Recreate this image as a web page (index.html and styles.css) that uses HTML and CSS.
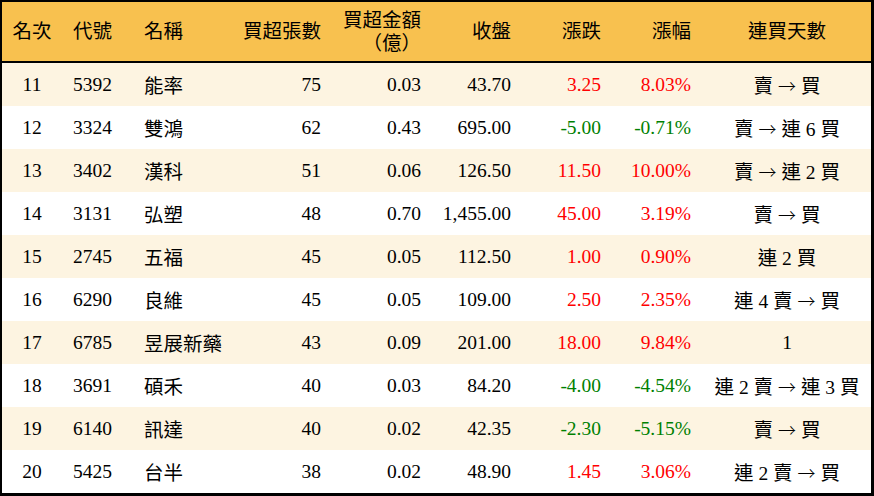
FILE: index.html
```html
<!DOCTYPE html>
<html lang="zh-Hant">
<head>
<meta charset="utf-8">
<title>買超排行</title>
<link rel="stylesheet" href="styles.css">
</head>
<body>
<div class="board">
  <div class="row head">
    <div class="c center">名次</div>
    <div class="c left code">代號</div>
    <div class="c left name">名稱</div>
    <div class="c right">買超張數</div>
    <div class="c right two">買超金額<br>（億）</div>
    <div class="c right">收盤</div>
    <div class="c right">漲跌</div>
    <div class="c right">漲幅</div>
    <div class="c center">連買天數</div>
  </div>

  <div class="row odd">
    <div class="c center">11</div><div class="c left code">5392</div><div class="c left name">能率</div>
    <div class="c right">75</div><div class="c right">0.03</div><div class="c right">43.70</div>
    <div class="c right up">3.25</div><div class="c right up">8.03%</div><div class="c center">賣 <span class="arr">→</span> 買</div>
  </div>
  <div class="row">
    <div class="c center">12</div><div class="c left code">3324</div><div class="c left name">雙鴻</div>
    <div class="c right">62</div><div class="c right">0.43</div><div class="c right">695.00</div>
    <div class="c right down">-5.00</div><div class="c right down">-0.71%</div><div class="c center">賣 <span class="arr">→</span> 連 6 買</div>
  </div>
  <div class="row odd">
    <div class="c center">13</div><div class="c left code">3402</div><div class="c left name">漢科</div>
    <div class="c right">51</div><div class="c right">0.06</div><div class="c right">126.50</div>
    <div class="c right up">11.50</div><div class="c right up">10.00%</div><div class="c center">賣 <span class="arr">→</span> 連 2 買</div>
  </div>
  <div class="row">
    <div class="c center">14</div><div class="c left code">3131</div><div class="c left name">弘塑</div>
    <div class="c right">48</div><div class="c right">0.70</div><div class="c right">1,455.00</div>
    <div class="c right up">45.00</div><div class="c right up">3.19%</div><div class="c center">賣 <span class="arr">→</span> 買</div>
  </div>
  <div class="row odd">
    <div class="c center">15</div><div class="c left code">2745</div><div class="c left name">五福</div>
    <div class="c right">45</div><div class="c right">0.05</div><div class="c right">112.50</div>
    <div class="c right up">1.00</div><div class="c right up">0.90%</div><div class="c center">連 2 買</div>
  </div>
  <div class="row">
    <div class="c center">16</div><div class="c left code">6290</div><div class="c left name">良維</div>
    <div class="c right">45</div><div class="c right">0.05</div><div class="c right">109.00</div>
    <div class="c right up">2.50</div><div class="c right up">2.35%</div><div class="c center">連 4 賣 <span class="arr">→</span> 買</div>
  </div>
  <div class="row odd">
    <div class="c center">17</div><div class="c left code">6785</div><div class="c left name">昱展新藥</div>
    <div class="c right">43</div><div class="c right">0.09</div><div class="c right">201.00</div>
    <div class="c right up">18.00</div><div class="c right up">9.84%</div><div class="c center">1</div>
  </div>
  <div class="row">
    <div class="c center">18</div><div class="c left code">3691</div><div class="c left name">碩禾</div>
    <div class="c right">40</div><div class="c right">0.03</div><div class="c right">84.20</div>
    <div class="c right down">-4.00</div><div class="c right down">-4.54%</div><div class="c center">連 2 賣 <span class="arr">→</span> 連 3 買</div>
  </div>
  <div class="row odd">
    <div class="c center">19</div><div class="c left code">6140</div><div class="c left name">訊達</div>
    <div class="c right">40</div><div class="c right">0.02</div><div class="c right">42.35</div>
    <div class="c right down">-2.30</div><div class="c right down">-5.15%</div><div class="c center">賣 <span class="arr">→</span> 買</div>
  </div>
  <div class="row">
    <div class="c center">20</div><div class="c left code">5425</div><div class="c left name">台半</div>
    <div class="c right">38</div><div class="c right">0.02</div><div class="c right">48.90</div>
    <div class="c right up">1.45</div><div class="c right up">3.06%</div><div class="c center">連 2 賣 <span class="arr">→</span> 買</div>
  </div>
</div>
</body>
</html>
```

FILE: styles.css
```css
* { box-sizing: border-box; }

html, body {
  margin: 0;
  padding: 0;
  background: #ffffff;
}

.board {
  width: 874px;
  height: 496px;
  border-style: solid;
  border-color: #000;
  border-width: 2px 3px 3px 2px;
  font-family: "Liberation Serif", "Noto Sans CJK TC", serif;
  font-size: 19.5px;
  color: #000;
  background: #fff;
}

.row {
  display: grid;
  grid-template-columns: 60px 70px 106px 95px 100px 90px 90px 90px 168px;
  height: 43px;
  align-items: center;
  background: #ffffff;
}

.row.odd {
  background: #fdf4e1;
}

.row.head {
  height: 61px;
  background: #f8c14f;
  border-bottom: 2px solid #000;
  line-height: 23px;
}

.c {
  white-space: nowrap;
}

.center { text-align: center; }
.left { text-align: left; }
.right { text-align: right; padding-right: 12px; }

.code { padding-left: 11px; }
.name { padding-left: 12px; }

.two { padding-top: 1px; }

.arr {
  font-family: "Noto Sans CJK TC", sans-serif;
  font-size: 18px;
  font-weight: 300;
}

.up { color: #ff0000; }
.down { color: #008000; }
```
